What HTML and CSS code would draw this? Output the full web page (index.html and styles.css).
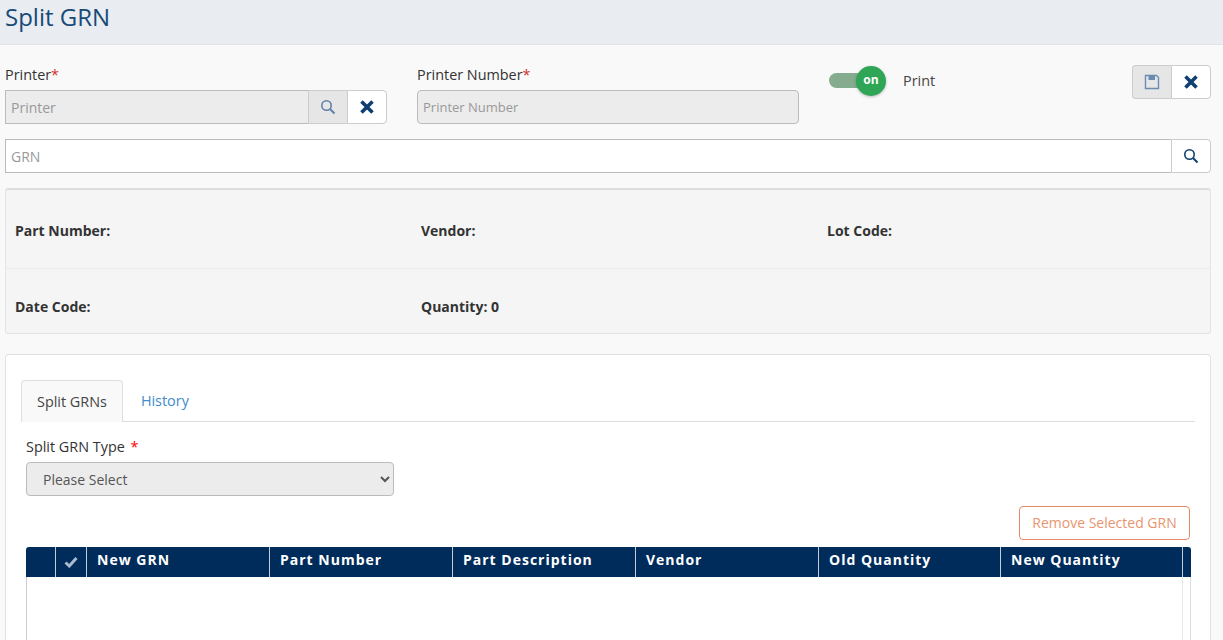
FILE: index.html
```html
<!DOCTYPE html>
<html lang="en">
<head>
  <meta charset="UTF-8">
  <title>Split GRN</title>
  <link rel="stylesheet" href="styles.css">
</head>
<body>

  <header class="page-title">Split GRN</header>

  <main class="content">
    <div class="top-row">
      <div class="field printer-field">
        <label>Printer<span class="req">*</span></label>
        <div class="group">
          <input class="box grey first" type="text" placeholder="Printer" disabled>
          <span class="addon grey-addon">
            <svg width="16" height="16" viewBox="0 0 16 16"><circle cx="6.5" cy="6.5" r="4.7" fill="none" stroke="#5f83a8" stroke-width="1.6"/><path d="M10 10l4.5 4.5" stroke="#5f83a8" stroke-width="2"/></svg>
          </span>
          <span class="addon last">
            <svg width="16" height="16" viewBox="0 0 16 16"><path d="M2.5 2.5l11 11M13.5 2.5l-11 11" stroke="#0f3f71" stroke-width="3.6"/></svg>
          </span>
        </div>
      </div>

      <div class="field number-field">
        <label>Printer Number<span class="req">*</span></label>
        <input class="box grey single" type="text" placeholder="Printer Number" disabled>
      </div>

      <div class="toggle-wrap">
        <span class="toggle-track"><span class="toggle-knob">on</span></span>
        <span class="toggle-label">Print</span>
      </div>

      <div class="actions">
        <span class="action save">
          <svg width="16" height="16" viewBox="0 0 16 16"><path d="M1.5 1.5h11l2 2v11h-13z" fill="none" stroke="#6a8cb0" stroke-width="1.4"/><path d="M4.5 1.5h6.5v4.5h-6.5z" fill="#6a8cb0"/></svg>
        </span>
        <span class="action close">
          <svg width="16" height="16" viewBox="0 0 16 16"><path d="M2.5 2.5l11 11M13.5 2.5l-11 11" stroke="#0f3f71" stroke-width="3.6"/></svg>
        </span>
      </div>
    </div>

    <div class="group grn-row">
      <input class="box first grn-input" type="text" placeholder="GRN">
      <span class="addon last">
        <svg width="16" height="16" viewBox="0 0 16 16"><circle cx="6.5" cy="6.5" r="4.7" fill="none" stroke="#0f3f71" stroke-width="1.6"/><path d="M10 10l4.5 4.5" stroke="#0f3f71" stroke-width="2"/></svg>
      </span>
    </div>

    <section class="info-panel">
      <div class="info-row first-row">
        <span class="info-item">Part Number:</span>
        <span class="info-item">Vendor:</span>
        <span class="info-item">Lot Code:</span>
      </div>
      <div class="info-row second-row">
        <span class="info-item">Date Code:</span>
        <span class="info-item">Quantity: 0</span>
        <span class="info-item"></span>
      </div>
    </section>

    <section class="card">
      <div class="tabs">
        <span class="tab active">Split GRNs</span>
        <span class="tab link">History</span>
      </div>

      <label class="type-label">Split GRN Type <span class="req-bright">*</span></label>
      <select class="type-select">
        <option>Please Select</option>
      </select>

      <div class="remove-row">
        <button class="remove-btn" type="button">Remove Selected GRN</button>
      </div>

      <div class="grid">
        <div class="grid-head">
          <span class="cell narrow"></span>
          <span class="cell narrow check">
            <svg width="14" height="12" viewBox="0 0 14 12"><path d="M1.5 6.5l3.8 3.5L12.5 2" fill="none" stroke="#a9bccd" stroke-width="3"/></svg>
          </span>
          <span class="cell col">New GRN</span>
          <span class="cell col">Part Number</span>
          <span class="cell col">Part Description</span>
          <span class="cell col">Vendor</span>
          <span class="cell col short">Old Quantity</span>
          <span class="cell col short">New Quantity</span>
          <span class="cell end"></span>
        </div>
        <div class="grid-body"><div class="scroll-strip"></div></div>
      </div>
    </section>
  </main>

</body>
</html>
```

FILE: styles.css
```css
* {
  box-sizing: border-box;
}
body {
  margin: 0;
  height: 640px;
  overflow: hidden;
  background-color: #f9f9f9;
  font-family: "Open Sans", sans-serif;
  font-size: 14px;
  color: #333;
}
.page-title {
  height: 45px;
  padding: 0 5px;
  background-color: #e9ecf1;
  border-bottom: 1px solid #dfe3e9;
  color: #174a77;
  font-size: 24px;
  line-height: 33px;
}
.content {
  padding: 0 12px 0 5px;
}
.top-row {
  display: flex;
  height: 93px;
  padding-top: 20px;
}
.field label {
  display: block;
  height: 25px;
  line-height: 20px;
  font-size: 14.4px;
}
.req {
  color: #d32f2f;
}
.req-bright {
  color: #f00;
  margin-left: 2px;
}
.printer-field {
  width: 382px;
}
.number-field {
  width: 382px;
  margin-left: 30px;
}
.group {
  display: flex;
  height: 34px;
}
.box {
  height: 34px;
  padding: 0 5px;
  border: 1px solid #bbb;
  font-family: "Open Sans", sans-serif;
  font-size: 14px;
  background-color: #fff;
}
.box::placeholder {
  color: #999;
  opacity: 1;
}
.box.grey {
  background-color: #ececec;
}
.box.first {
  flex: 1;
  min-width: 0;
  border-right: 0;
}
.box.single {
  width: 100%;
  border-radius: 4px;
  font-size: 13px;
}
.addon {
  display: flex;
  align-items: center;
  justify-content: center;
  width: 40px;
  height: 34px;
  background-color: #fff;
  border: 1px solid #ccc;
}
.grey-addon {
  background-color: #e6e6e6;
  border-right: 0;
  width: 39px;
}
.addon.last {
  border-radius: 0 4px 4px 0;
}
.toggle-wrap {
  display: flex;
  align-items: center;
  height: 30px;
  margin-left: 30px;
}
.toggle-track {
  display: block;
  position: relative;
  width: 42px;
  height: 15px;
  border-radius: 8px;
  background-color: #86ac90;
}
.toggle-knob {
  position: absolute;
  top: -7px;
  right: -15px;
  width: 30px;
  height: 30px;
  border-radius: 50%;
  background-color: #2fa556;
  color: #fff;
  font-size: 12px;
  font-weight: 700;
  line-height: 28px;
  text-align: center;
  box-shadow: 0 1px 3px rgba(0, 0, 0, 0.25);
}
.toggle-label {
  margin-left: 32px;
  color: #444;
  font-size: 14.4px;
}
.actions {
  display: flex;
  height: 34px;
  margin-left: auto;
}
.action {
  display: flex;
  align-items: center;
  justify-content: center;
  height: 34px;
  border: 1px solid #ccc;
}
.save {
  width: 39px;
  background-color: #e6e6e6;
  border-right: 0;
  border-radius: 4px 0 0 4px;
}
.close {
  width: 40px;
  background-color: #fff;
  border-radius: 0 4px 4px 0;
}
.grn-row {
  margin-top: 1px;
}
.grn-input {
  flex: 1;
}
.info-panel {
  height: 146px;
  margin-top: 15px;
  background-color: #f5f5f5;
  border: 1px solid #e4e4e4;
  border-top: 2px solid #ddd;
  border-radius: 3px;
  font-weight: 700;
  font-size: 14px;
  color: #333;
}
.info-row {
  display: grid;
  grid-template-columns: 406px 406px 1fr;
  padding-left: 9px;
}
.first-row {
  height: 79px;
  padding-top: 31px;
  border-bottom: 1px solid #ebebeb;
}
.second-row {
  padding-top: 28px;
}
.card {
  height: 286px;
  margin-top: 20px;
  padding: 25px 15px 0 15px;
  background-color: #fff;
  border: 1px solid #e2e2e2;
  border-bottom: 0;
  border-radius: 4px 4px 0 0;
}
.tabs {
  display: flex;
  height: 42px;
  border-bottom: 1px solid #ddd;
}
.tab {
  height: 42px;
  padding: 0 15px;
  font-size: 14.4px;
  line-height: 41px;
}
.tab.active {
  background-color: #f9f9f9;
  border: 1px solid #ddd;
  border-bottom: 0;
  border-radius: 4px 4px 0 0;
  color: #444;
}
.tab.link {
  padding-left: 18px;
  color: #428bca;
}
.type-label {
  display: block;
  margin: 15px 0 0 5px;
  height: 25px;
  font-size: 14.4px;
  line-height: 20px;
}
.type-select {
  display: block;
  width: 368px;
  height: 34px;
  margin-left: 5px;
  padding-left: 12px;
  background-color: #ececec;
  border: 1px solid #bbb;
  border-radius: 4px;
  font-family: "Open Sans", sans-serif;
  font-size: 14px;
  color: #555;
}
.remove-row {
  display: flex;
  justify-content: flex-end;
  margin: 10px 5px 0 0;
  height: 41px;
}
.remove-btn {
  width: 171px;
  height: 34px;
  padding: 0 0 2px;
  background-color: #fff;
  border: 1px solid #e58a62;
  border-radius: 4px;
  color: #e9946f;
  font-family: "Open Sans", sans-serif;
  font-size: 14px;
}
.grid {
  margin: 0 4px 0 5px;
}
.grid-head {
  display: flex;
  height: 30px;
  background-color: #002c5c;
  border-radius: 3px 3px 0 0;
  color: #fff;
  font-size: 14px;
  font-weight: 700;
  letter-spacing: 1px;
}
.cell {
  height: 30px;
  border-right: 1px solid #c6ccd4;
}
.narrow {
  width: 30px;
}
.check {
  width: 31px;
  display: flex;
  align-items: center;
  justify-content: center;
}
.col {
  width: 183px;
  padding: 3px 0 0 10px;
  line-height: 20px;
}
.short {
  width: 182px;
}
.end {
  border-right: 0;
  flex: 1;
}
.grid-body {
  display: flex;
  justify-content: flex-end;
  height: 63px;
  border-left: 1px solid #ccc;
  border-right: 1px solid #ddd;
}
.scroll-strip {
  width: 8px;
  border-left: 1px solid #e6e6e6;
}
```
